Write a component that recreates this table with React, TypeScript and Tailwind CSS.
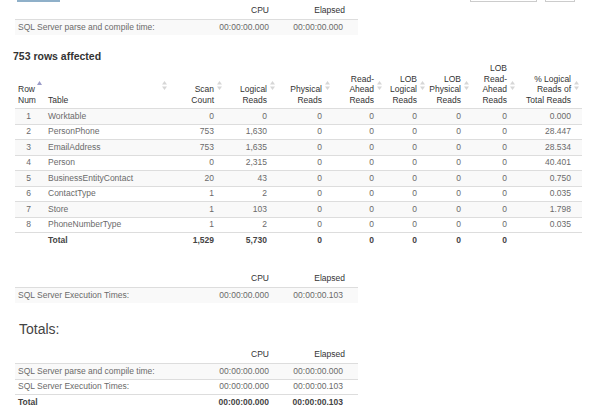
import React from 'react';

interface StatRow {
    num: number;
    table: string;
    scan: string;
    logical: string;
    pct: string;
}

const rows: StatRow[] = [
    { num: 1, table: 'Worktable', scan: '0', logical: '0', pct: '0.000' },
    { num: 2, table: 'PersonPhone', scan: '753', logical: '1,630', pct: '28.447' },
    { num: 3, table: 'EmailAddress', scan: '753', logical: '1,635', pct: '28.534' },
    { num: 4, table: 'Person', scan: '0', logical: '2,315', pct: '40.401' },
    { num: 5, table: 'BusinessEntityContact', scan: '20', logical: '43', pct: '0.750' },
    { num: 6, table: 'ContactType', scan: '1', logical: '2', pct: '0.035' },
    { num: 7, table: 'Store', scan: '1', logical: '103', pct: '1.798' },
    { num: 8, table: 'PhoneNumberType', scan: '1', logical: '2', pct: '0.035' },
];

const SortIcon = () => (
    <svg width="5" height="9" viewBox="0 0 5 9" className="absolute right-[3px] top-[18px]">
        <path d="M2.5 0 L5 3.5 L0 3.5 Z" fill="#d6d6d6" />
        <path d="M2.5 9 L5 5.5 L0 5.5 Z" fill="#d6d6d6" />
    </svg>
);

const AscIcon = () => (
    <svg width="5" height="4" viewBox="0 0 5 4" className="absolute left-[22px] top-[18px]">
        <path d="M2.5 0 L5 4 L0 4 Z" fill="#9a9cc8" />
    </svg>
);

// small two-column timing table (CPU / Elapsed)
const TimeTable: React.FC<{ items: { label: string; cpu: string; elapsed: string; bold?: boolean }[] }> = ({ items }) => (
    <table className="table-fixed border-collapse w-[343px] ml-[15px] text-[8.5px]">
        <colgroup>
            <col className="w-[190px]" />
            <col className="w-[70px]" />
            <col className="w-[83px]" />
        </colgroup>
        <thead>
            <tr className="h-[16px] text-[#333]">
                <th></th>
                <th className="text-right font-normal pr-[6px] align-bottom pb-[2px]">CPU</th>
                <th className="text-right font-normal pr-[13px] align-bottom pb-[2px]">Elapsed</th>
            </tr>
        </thead>
        <tbody>
            {items.map((it, i) => (
                <tr
                    key={it.label}
                    className={`h-[15.5px] border-t border-[#dddddd] ${i % 2 === 0 && !it.bold ? 'bg-[#f9f9f9]' : ''} ${it.bold ? 'font-bold text-[#444]' : 'text-[#6a6a6a]'}`}
                >
                    <td className="pl-[3px]">{it.label}</td>
                    <td className="text-right pr-[6px]">{it.cpu}</td>
                    <td className="text-right pr-[15px]">{it.elapsed}</td>
                </tr>
            ))}
        </tbody>
    </table>
);

const headers = [
    ['Scan', 'Count'],
    ['Logical', 'Reads'],
    ['Physical', 'Reads'],
    ['Read-', 'Ahead', 'Reads'],
    ['LOB', 'Logical', 'Reads'],
    ['LOB', 'Physical', 'Reads'],
    ['LOB', 'Read-', 'Ahead', 'Reads'],
    ['% Logical', 'Reads of', 'Total Reads'],
];

const colWidths = ['w-[55px]', 'w-[53px]', 'w-[55px]', 'w-[52px]', 'w-[43px]', 'w-[44px]', 'w-[46px]', 'w-[64px]'];

export default function App() {
    return (
        <div
            className="w-[590px] h-[415px] bg-white overflow-hidden relative"
            style={{ fontFamily: '"Liberation Sans", Arial, sans-serif' }}
        >
            {/* bottoms of controls cut off at the top edge */}
            <div className="flex h-[2px]">
                <div className="ml-[17px] w-[43px] border-b-2 border-x border-[#8fb0c9]"></div>
                <div className="ml-auto w-[67px] border-b border-x border-[#cccccc]"></div>
                <div className="ml-[8px] mr-[15px] w-[30px] border-b border-x border-[#cccccc]"></div>
            </div>

            <div className="mt-[1px]">
                <TimeTable items={[{ label: 'SQL Server parse and compile time:', cpu: '00:00:00.000', elapsed: '00:00:00.000' }]} />
            </div>

            <div className="ml-[13px] mt-[15px] text-[10.5px] font-bold text-[#333] leading-[12px]">753 rows affected</div>

            <table className="table-fixed border-collapse w-[567px] ml-[15px] mt-[1px] text-[8.5px]">
                <colgroup>
                    <col className="w-[27px]" />
                    <col className="w-[128px]" />
                    {colWidths.map((w, i) => (
                        <col key={i} className={w} />
                    ))}
                </colgroup>
                <thead>
                    <tr className="h-[46px] text-[#333] leading-[10.5px]">
                        <th className="relative text-left font-normal align-bottom pb-[3px] pl-[3px]">
                            Row
                            <br />
                            Num
                            <AscIcon />
                        </th>
                        <th className="relative text-left font-normal align-bottom pb-[3px] pl-[6px]">
                            Table
                            <SortIcon />
                        </th>
                        {headers.map((h, i) => (
                            <th key={i} className="relative text-right font-normal align-bottom pb-[3px] pr-[11px]">
                                {h.map((line, j) => (
                                    <div key={j}>{line}</div>
                                ))}
                                <SortIcon />
                            </th>
                        ))}
                    </tr>
                </thead>
                <tbody className="text-[#6a6a6a]">
                    {rows.map((r, i) => (
                        <tr key={r.num} className={`h-[15.5px] border-t border-[#dddddd] ${i % 2 === 0 ? 'bg-[#f9f9f9]' : ''}`}>
                            <td className="text-center">{r.num}</td>
                            <td className="pl-[6px]">{r.table}</td>
                            <td className="text-right pr-[11px]">{r.scan}</td>
                            <td className="text-right pr-[11px]">{r.logical}</td>
                            <td className="text-right pr-[11px]">0</td>
                            <td className="text-right pr-[11px]">0</td>
                            <td className="text-right pr-[11px]">0</td>
                            <td className="text-right pr-[11px]">0</td>
                            <td className="text-right pr-[11px]">0</td>
                            <td className="text-right pr-[11px]">{r.pct}</td>
                        </tr>
                    ))}
                    <tr className="h-[15.5px] border-t border-[#dddddd] font-bold text-[#444]">
                        <td></td>
                        <td className="pl-[6px]">Total</td>
                        <td className="text-right pr-[11px]">1,529</td>
                        <td className="text-right pr-[11px]">5,730</td>
                        <td className="text-right pr-[11px]">0</td>
                        <td className="text-right pr-[11px]">0</td>
                        <td className="text-right pr-[11px]">0</td>
                        <td className="text-right pr-[11px]">0</td>
                        <td className="text-right pr-[11px]">0</td>
                        <td></td>
                    </tr>
                </tbody>
            </table>

            <div className="mt-[23px]">
                <TimeTable items={[{ label: 'SQL Server Execution Times:', cpu: '00:00:00.000', elapsed: '00:00:00.103' }]} />
            </div>

            <div className="ml-[19px] mt-[16px] text-[14px] text-[#444] leading-[20px]">Totals:</div>

            <div className="mt-[9px]">
                <TimeTable
                    items={[
                        { label: 'SQL Server parse and compile time:', cpu: '00:00:00.000', elapsed: '00:00:00.000' },
                        { label: 'SQL Server Execution Times:', cpu: '00:00:00.000', elapsed: '00:00:00.103' },
                        { label: 'Total', cpu: '00:00:00.000', elapsed: '00:00:00.103', bold: true },
                    ]}
                />
            </div>
        </div>
    );
}
